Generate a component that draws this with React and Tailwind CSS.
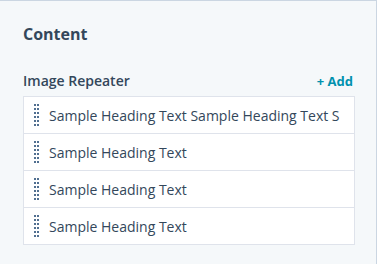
import React from 'react'

const items = [
  'Sample Heading Text Sample Heading Text S',
  'Sample Heading Text',
  'Sample Heading Text',
  'Sample Heading Text',
]

const DragHandle = () => (
  <div className="grid grid-cols-2 gap-x-[1px] gap-y-[2px] shrink-0">
    {Array.from({ length: 12 }).map((_, i) => (
      <span key={i} className="block w-[2px] h-[2px] bg-[#516f90]" />
    ))}
  </div>
)

export default function App() {
  return (
    <div
      className="w-[377px] h-[264px] bg-[#f5f8fa] border-t border-r border-[#cbd6e2] px-[23px] pt-[22px] text-[#33475b]"
      style={{ fontFamily: '"Open Sans", "Liberation Sans", sans-serif' }}
    >
      <h2 className="text-[16px] font-bold leading-[22px]">Content</h2>

      <div className="mt-[26px] flex items-center justify-between">
        <h3 className="text-[14px] font-semibold leading-[20px]">Image Repeater</h3>
        <button className="text-[13px] font-bold text-[#0091ae] leading-[16px]">+ Add</button>
      </div>

      <ul className="mt-[5px] w-[332px] bg-white border border-[#dfe3eb]">
        {items.map((text, i) => (
          <li
            key={i}
            className="h-[37px] first:h-[36px] flex items-center gap-[10px] pl-[10px] pr-[6px] border-t border-[#dfe3eb] first:border-t-0 overflow-hidden"
          >
            <DragHandle />
            <span className="text-[14px] whitespace-nowrap overflow-hidden">{text}</span>
          </li>
        ))}
      </ul>
    </div>
  )
}
